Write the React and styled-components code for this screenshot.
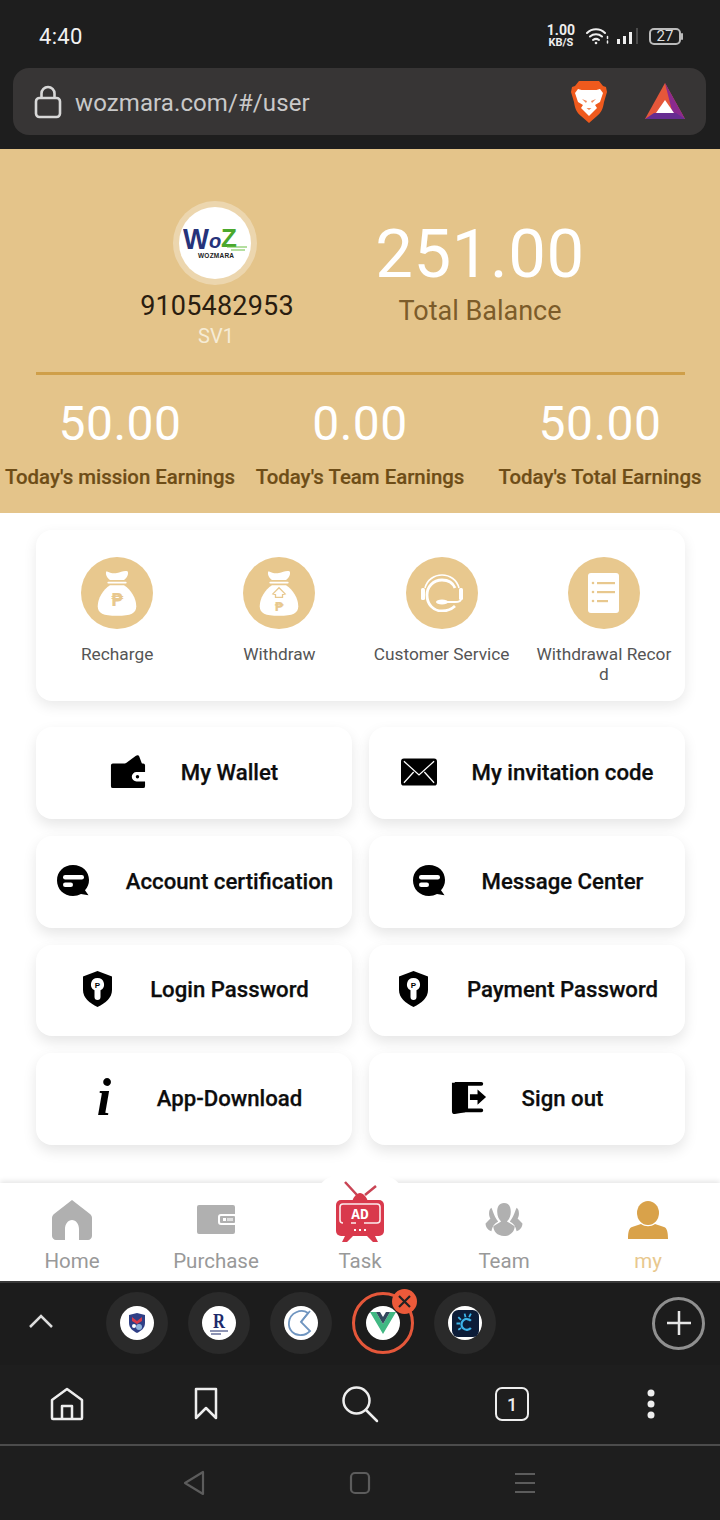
import React from "react";
import styled, { createGlobalStyle } from "styled-components";

const Global = createGlobalStyle`
  html, body { margin: 0; padding: 0; background: #1f1f1f; }
  * { box-sizing: border-box; }
  body { font-family: Roboto, "Liberation Sans", sans-serif; }
`;

const Page = styled.div`
  width: 720px; height: 1520px; display: flex; flex-direction: column;
  background: #1e1e1e; overflow: hidden;
`;
const StatusBar = styled.div`
  height: 68px; flex: none; display: flex; align-items: center; justify-content: space-between;
  padding: 4px 39px 0 39px; color: #f2f2f2;
`;
const Clock = styled.div`font-size: 22px; letter-spacing: .3px;`;
const StatusIcons = styled.div`display: flex; align-items: center; gap: 7px;`;
const Speed = styled.div`
  display: flex; flex-direction: column; align-items: center; font-weight: 700; color: #eee;
  margin-right: 4px;
  b { font-size: 14px; line-height: 13px; font-weight: 700; }
  span { font-size: 11px; line-height: 11px; }
`;
const Battery = styled.div`
  width: 32px; height: 17px; border: 2px solid #bbb; border-radius: 5px; font-size: 15px; line-height: 13px;
  text-align: center; color: #ddd; margin-left: 2px; position: relative;
  &::after { content: ""; position: absolute; right: -4px; top: 3px; width: 2px; height: 7px; background: #bbb; border-radius: 1px; }
`;
const UrlWrap = styled.div`height: 81px; flex: none; padding: 0 14px 14px 13px;`;
const UrlBar = styled.div`
  height: 67px; background: #373535; border-radius: 16px; display: flex; align-items: center;
  padding: 0 21px 0 21px; color: #c9c9c9; font-size: 24px;
`;
const UrlText = styled.div`margin-left: 13px; flex: 1; letter-spacing: .1px; padding-top: 3px;`;
const UrlLogos = styled.div`display: flex; align-items: center; gap: 37px;`;

const Hero = styled.section`height: 364px; flex: none; background: #e4c48a; padding-top: 52px;`;
const HeroTop = styled.div`display: flex; padding-left: 137px; gap: 33px; height: 147px;`;
const Profile = styled.div`width: 160px; display: flex; flex-direction: column; align-items: center;`;
const Avatar = styled.div`
  width: 84px; height: 84px; border-radius: 50%; background: #ecd6ae; display: flex; align-items: center;
  justify-content: center; margin-left: -5px;
  > div { width: 72px; height: 72px; border-radius: 50%; background: #fff; display: flex; align-items: center; justify-content: center; }
`;
const Phone = styled.div`font-size: 27px; line-height: 32px; color: #2a1d10; margin-top: 5px; letter-spacing: .2px; white-space: nowrap;`;
const Level = styled.div`font-size: 20px; line-height: 24px; color: #f6ecd6; margin-top: 2px; margin-left: -2px;`;
const Balance = styled.div`width: 300px; padding-top: 15px; text-align: center;`;
const BalanceValue = styled.div`font-size: 67px; line-height: 76px; color: #fff; letter-spacing: .6px;`;
const BalanceLabel = styled.div`font-size: 27px; line-height: 34px; color: #7c5c2a; margin-top: 2px;`;
const HeroRule = styled.div`height: 3px; background: #cf9f49; margin: 24px 35px 0 36px;`;
const Stats = styled.div`display: grid; grid-template-columns: repeat(3, 240px); margin-top: 19px;`;
const Stat = styled.div`text-align: center; white-space: nowrap;`;
const StatValue = styled.div`font-size: 48px; line-height: 60px; color: #fff; letter-spacing: .5px;`;
const StatLabel = styled.div`font-size: 20.4px; line-height: 28px; font-weight: 500; color: #6e4d17; margin-top: 9px; -webkit-text-stroke: .2px #6e4d17;`;

const Content = styled.main`height: 670px; flex: none; background: #fff; padding: 17px 35px 0 36px;`;
const QuickCard = styled.div`
  height: 171px; border-radius: 16px; background: #fff; box-shadow: 0 5px 14px rgba(0,0,0,.09);
  display: grid; grid-template-columns: repeat(4, 1fr); padding-top: 27px;
`;
const Quick = styled.div`display: flex; flex-direction: column; align-items: center; padding: 0 12px;`;
const QuickCircle = styled.div`
  width: 72px; height: 72px; border-radius: 50%; background: #e8c88e; display: flex; align-items: center; justify-content: center; flex: none;
`;
const QuickLabel = styled.div`
  font-size: 17.3px; line-height: 20px; color: #555; text-align: center; margin-top: 15px; word-break: break-all; width: 138px;
`;
const ActionGrid = styled.div`display: grid; grid-template-columns: 316px 316px; column-gap: 17px; row-gap: 17px; margin-top: 26px;`;
const ActionCard = styled.div`
  height: 91.75px; border-radius: 16px; background: #fff; box-shadow: 0 6px 14px rgba(0,0,0,.1);
  display: flex; align-items: center; justify-content: center; gap: 35px; padding-bottom: 2px;
`;
const ActionIcon = styled.div`width: 36px; display: flex; justify-content: center; flex: none;`;
const ActionLabel = styled.div`font-size: 22.2px; font-weight: 500; color: #0d0d0d; white-space: nowrap; -webkit-text-stroke: .25px #0d0d0d;`;

const TabBar = styled.nav`
  height: 98px; flex: none; background: #fff; display: grid; grid-template-columns: repeat(5, 144px);
  position: relative; box-shadow: 0 -2px 5px rgba(0,0,0,.1);
  &::before { content: ""; position: absolute; left: 318px; top: -12px; width: 84px; height: 40px; border-radius: 50% 50% 0 0; background: #fff; }
`;
const TabItem = styled.div`
  position: relative; display: flex; flex-direction: column; align-items: center;
  height: 98px; padding-bottom: 8px;
`;
const TabIconBox = styled.div`
  display: flex; justify-content: center; flex: none;
  align-items: ${p => (p.$raised ? "flex-start" : "center")};
  height: ${p => (p.$raised ? 69 : 66)}px;
  margin-top: ${p => (p.$raised ? -3 : 0)}px;
  padding-top: ${p => (p.$raised ? 0 : 7)}px;
`;
const TabLabel = styled.div`font-size: 20.5px; line-height: 24px; color: ${p => (p.$active ? "#e8c88e" : "#999")};`;

const BrowserTabs = styled.div`
  height: 84px; flex: none; background: #1c1c1c; border-top: 2px solid #3a3a3a; display: flex; align-items: center;
  padding: 0 15px 2px 29px;
`;
const Chevron = styled.div`width: 24px; display: flex; margin-right: 53px; margin-top: -4px;`;
const Chips = styled.div`display: flex; gap: 20px;`;
const Chip = styled.div`
  width: 62px; height: 62px; border-radius: 50%; background: ${p => (p.$active ? "transparent" : "#2a2a2a")};
  border: ${p => (p.$active ? "3px solid #e5573a" : "none")};
  display: flex; align-items: center; justify-content: center; position: relative;
`;
const Favicon = styled.div`
  width: 34px; height: 34px; border-radius: 50%; background: #fff; display: flex; align-items: center; justify-content: center;
`;
const CloseBadge = styled.div`
  position: absolute; right: -6px; top: -6px; width: 25px; height: 25px; border-radius: 50%; background: #ec5a3a;
  display: flex; align-items: center; justify-content: center;
`;
const AddButton = styled.div`
  margin-left: auto; width: 53px; height: 53px; border-radius: 50%; border: 3px solid #8f8f8f; display: flex; align-items: center; justify-content: center;
`;
const Toolbar = styled.div`
  height: 79px; flex: none; display: grid; grid-template-columns: 134px 144px 164px 140px 138px; align-items: center; background: #1e1e1e;
  justify-items: center; padding-bottom: 1px;
`;
const TabCount = styled.div`
  width: 34px; height: 34px; border: 2.5px solid #eee; border-radius: 7px; display: flex; align-items: center; justify-content: center;
  color: #eee; font-size: 18px; font-weight: 500;
`;
const Rule = styled.div`height: 2px; flex: none; background: #4c4c4c;`;
const SystemNav = styled.div`flex: 1; display: flex; align-items: center; justify-content: center; gap: 143px; background: #1e1e1e; padding-right: 3px;`;

/* drawings */
const Lock = () => (
  <svg width="28" height="34" viewBox="0 0 28 34" fill="none" stroke="#d8d8d8" strokeWidth="2.6">
    <rect x="2" y="13" width="24" height="19" rx="3.5" /><path d="M7.5 13V8.5a6.5 6.5 0 0 1 13 0V13" />
  </svg>
);
const Wifi = () => (
  <svg width="24" height="18" viewBox="0 0 24 18" fill="none" stroke="#eee" strokeWidth="2" strokeLinecap="round">
    <path d="M1 6c5-5 13-5 18 0M4 9.500c3.500-3 8.500-3 12 0M7 13c2-1.500 4-1.500 6 0" />
    <circle cx="10" cy="16" r="1.300" fill="#eee" stroke="none" />
    <path d="M21.500 9.500v2M21.500 14v2" strokeWidth="1.500" />
  </svg>
);
const Signal = () => (
  <svg width="23" height="18" viewBox="0 0 23 18" fill="#eee">
    <rect x="0" y="12" width="3" height="5" /><rect x="6" y="9" width="3" height="8" /><rect x="12" y="5" width="3" height="12" />
    <rect x="19" y="1" width="2" height="16" fill="#4a4a4a" />
  </svg>
);
const Brave = () => (
  <svg width="38" height="44" viewBox="0 0 38 44">
    <path d="M9 1h20l4 5 3 1 1 5-3 10c-1 7-3 11-7 14l-8 7-8-7c-4-3-6-7-7-14L1 12l1-5 3-1z" fill="#ef5a1d" />
    <path d="M8 9c4 1.500 8 1 11 1s7 .5 11-1l3 4-3 9-5 3 2 3-8 8-8-8 2-3-5-3-3-9z" fill="#fff" />
    <path d="M12 19l5 2-1 2zM26 19l-5 2 1 2zM16.500 28h5l-2.500 2z" fill="#ef8a5d" />
  </svg>
);
const Bat = () => (
  <svg width="40" height="38" viewBox="0 0 40 38">
    <path d="M20 0l20 36H0z" fill="#e5573a" /><path d="M20 0l20 36H29z" fill="#8a2a8f" /><path d="M0 36l9-6h22l9 6z" fill="#662d91" />
    <path d="M20 17l9 13H11z" fill="#fff" />
  </svg>
);
const WozLogo = () => (
  <svg width="64" height="42" viewBox="0 0 64 42">
    <text x="0" y="27" fontFamily="Liberation Sans" fontWeight="700" fontSize="30" fill="#26337a" textLength="26" lengthAdjust="spacingAndGlyphs">W</text>
    <text x="26" y="26" fontFamily="Liberation Sans" fontWeight="700" fontStyle="italic" fontSize="20" fill="#26337a">o</text>
    <text x="38" y="25" fontFamily="Liberation Sans" fontWeight="700" fontSize="26" fill="#4aa82e">Z</text>
    <path d="M44 25h20M48 28h14" stroke="#6bbf45" strokeWidth="1.200" />
    <text x="15" y="36" fontFamily="Liberation Sans" fontWeight="700" fontSize="6.500" fill="#222" textLength="36">WOZMARA</text>
  </svg>
);
const Bag = ({ up }) => (
  <svg width="42" height="50" viewBox="0 0 48 56">
    <path d="M12 3c4 2 8 3 12 2s8-3 12-2c2 3-1 8-4 10H16c-3-2-6-7-4-10z" fill="#fff" />
    <rect x="13" y="15" width="22" height="2" rx="1" fill="#fff" />
    <path d="M16 19h16c8 5 14 15 14 24 0 8-6 11-22 11S2 51 2 43c0-9 6-19 14-24z" fill="#fff" />
    {up && <path d="M24 22l7 7-3 1v3h-8v-3l-3-1z" fill="none" stroke="#e8c88e" strokeWidth="1.500" />}
    <text x="24" y={up ? 49 : 43} textAnchor="middle" fontFamily="DejaVu Sans" fontWeight="700" fontSize={up ? 15 : 20} fill="#e8c88e">₱</text>
  </svg>
);
const Headset = () => (
  <svg width="42" height="38" viewBox="0 0 42 38" fill="none" stroke="#fff" strokeWidth="1.600">
    <path d="M4 14C6 6 13 1 21 1s15 5 17 13" />
    <path d="M34 32c-3 3-8 5-13 5-9 0-15-7-15-16 0-8 6-15 15-15 6 0 11 3 13 8" strokeWidth="2.800" />
    <rect x="0" y="14" width="4" height="12" rx="1.500" fill="#fff" stroke="none" /><rect x="38" y="14" width="4" height="12" rx="1.500" fill="#fff" stroke="none" />
    <ellipse cx="21" cy="28" rx="6" ry="2.500" fill="#fff" stroke="none" /><path d="M25 28h9c3 0 6-1 6-3" strokeWidth="1.800" />
  </svg>
);
const Doc = () => (
  <svg width="31" height="40" viewBox="0 0 31 40">
    <rect x="0" y="0" width="31" height="40" rx="3" fill="#fff" />
    {[10, 19, 28].map((y, i) => (
      <g key={y} fill="#e8c88e"><circle cx="5" cy={y} r="1.300" /><rect x="9" y={y - 1} width={i === 2 ? 11 : 18} height="2.200" /></g>
    ))}
  </svg>
);
const WalletIcon = () => (
  <svg width="38" height="36" viewBox="0 0 38 36">
    <path d="M15 10L27 1c2-1 3-1 4 1l3 8z" fill="#000" />
    <path d="M3 9h32a2 2 0 0 1 2 2v7H28a5 5 0 0 0 0 10h9v5a2 2 0 0 1-2 2H3a2 2 0 0 1-2-2V11a2 2 0 0 1 2-2z" fill="#000" />
    <circle cx="29" cy="23" r="1.800" fill="#000" />
  </svg>
);
const MailIcon = () => (
  <svg width="37" height="28" viewBox="0 0 37 28">
    <rect width="37" height="28" rx="3" fill="#000" />
    <path d="M3 3l15.500 14L34 3M3 25l10-11M34 25L24 14" stroke="#fff" strokeWidth="1.300" fill="none" />
  </svg>
);
const ChatIcon = () => (
  <svg width="34" height="32" viewBox="0 0 34 32">
    <path d="M17 0c9.400 0 16 6.500 16 15 0 4-1.400 7.500-4 10.200l3.500 5L25 29c-2.400 1.300-5 2-8 2C7.600 31 1 24 1 15.500 1 6.500 7.600 0 17 0z" fill="#000" />
    <rect x="7" y="10" width="21" height="4.500" rx="2.200" fill="#fff" /><rect x="7" y="17.500" width="10" height="4.500" rx="2.200" fill="#fff" />
  </svg>
);
const ShieldIcon = () => (
  <svg width="31" height="36" viewBox="0 0 31 36">
    <path d="M15.500 0L30 5.500V19c0 8-6.500 13-14.500 17C7.500 32 1 27 1 19V5.500z" fill="#000" />
    <path d="M15.500 7a6.500 6.500 0 0 1 3 12.300V26a2.500 2.500 0 0 1-6 0v-6.700A6.500 6.500 0 0 1 15.500 7z" fill="#fff" />
    <text x="15.500" y="16.500" textAnchor="middle" fontFamily="Liberation Sans" fontWeight="700" fontSize="8" fill="#000">P</text>
  </svg>
);
const InfoIcon = () => (
  <svg width="24" height="64" viewBox="0 0 24 64">
    <text x="12" y="49" textAnchor="middle" fontFamily="Liberation Serif" fontWeight="700" fontStyle="italic" fontSize="52" fill="#000">i</text>
  </svg>
);
const SignOutIcon = () => (
  <svg width="38" height="36" viewBox="0 0 38 36">
    <path d="M1 2h14v31L4 35c-2 0-3-1-3-3z" fill="#000" /><path d="M4 1h28a2 2 0 0 1 0 4H4zM4 29h28a2 2 0 0 1 0 4H4z" fill="#000" />
    <path d="M20 14h8V9l9 8-9 8v-5h-8z" fill="#000" /><rect x="13" y="4" width="5" height="26" fill="#000" />
  </svg>
);
const HomeTab = () => (
  <svg width="40" height="40" viewBox="0 0 40 40">
    <path d="M20 0l18 14c1 1 2 2 2 4v18c0 2-2 4-4 4h-9V29c0-5-3-9-7-9s-7 4-7 9v11H4c-2 0-4-2-4-4V18c0-2 1-3 2-4z" fill="#b0b0b0" />
  </svg>
);
const WalletTab = () => (
  <svg width="38" height="29" viewBox="0 0 38 29">
    <path d="M2 0h34a2 2 0 0 1 2 2v7H24a3 3 0 0 0-3 3v5a3 3 0 0 0 3 3h14v7a2 2 0 0 1-2 2H2a2 2 0 0 1-2-2V2a2 2 0 0 1 2-2z" fill="#b0b0b0" />
    <rect x="23" y="11" width="15" height="7" rx="1" fill="#b0b0b0" /><rect x="26" y="13" width="3" height="3" fill="#fff" /><rect x="30" y="13" width="6" height="3" fill="#e0e0e0" />
  </svg>
);
const TvTab = () => (
  <svg width="50" height="62" viewBox="0 0 50 62">
    <path d="M10 2l12 13M41 6L30 15" stroke="#c94454" strokeWidth="2.500" fill="none" />
    <path d="M17 22c1-5 5-9 8-9s7 4 8 9z" fill="#d63a4a" />
    <rect x="1" y="20" width="48" height="36" rx="5" fill="#d9394c" />
    <path d="M10 56l-3 6h5l6-6zM40 56l3 6h-5l-6-6z" fill="#d9394c" />
    <path d="M8 43c-2 0-3-1-3-3V27c0-2 1-3 3-3h34c2 0 3 1 3 3v13c0 2-1 3-3 3H29M21 43h-5" stroke="#fff" strokeWidth="1.600" fill="none" opacity=".9" />
    <text x="25" y="39" textAnchor="middle" fontFamily="Liberation Mono" fontWeight="700" fontSize="14.500" fill="#fff">AD</text>
    <path d="M19 49h2v2h-2zM24 49h2v2h-2zM29 49h2v2h-2z" fill="#fff" />
  </svg>
);
const TeamTab = () => (
  <svg width="40" height="33" viewBox="0 0 40 34" fill="#b0b0b0">
    <path d="M7 5c-3 2-3 8-1 11l-5 5c0 4 3 7 6 8 1-5 3-8 7-10-4-4-5-10-7-14zM33 5c3 2 3 8 1 11l5 5c0 4-3 7-6 8-1-5-3-8-7-10 4-4 5-10 7-14z" />
    <path d="M20 0c5 0 7 4 7 9 0 5-2 8-4 10l8 5c0 5-4 10-11 10S9 29 9 24l8-5c-2-2-4-5-4-10 0-5 2-9 7-9z" />
  </svg>
);
const UserTab = () => (
  <svg width="40" height="38" viewBox="0 0 40 38" fill="#d9a24a">
    <ellipse cx="20" cy="12" rx="11" ry="12" /><path d="M13 23c4 3 10 3 14 0l9 3c3 1 4 5 4 12H0c0-7 1-11 4-12z" />
  </svg>
);
const ChevronUp = () => (
  <svg width="24" height="14" viewBox="0 0 24 14" fill="none" stroke="#ddd" strokeWidth="2.500"><path d="M1 13L12 2l11 11" /></svg>
);
const ShieldFav = () => (
  <svg width="18" height="20" viewBox="0 0 18 20">
    <path d="M1 2l8-2 8 2v8c0 5-4 8-8 10-4-2-8-5-8-10z" fill="#2f3f86" /><path d="M4 4l5 4 5-4v4l-5 3-5-3z" fill="#d73a4a" /><circle cx="11" cy="14" r="3" fill="#8fb3dc" /><circle cx="6" cy="13" r="2" fill="#fff" />
  </svg>
);
const RFav = () => (
  <svg width="24" height="28" viewBox="0 0 24 28">
    <text x="12" y="19" textAnchor="middle" fontFamily="Liberation Serif" fontWeight="700" fontSize="21" fill="#1d2a6b" textLength="12" lengthAdjust="spacingAndGlyphs">R</text>
    <path d="M3 22h18M4 25h10" stroke="#1d2a6b" strokeWidth="1.200" />
  </svg>
);
const ClockFav = () => (
  <svg width="30" height="30" viewBox="0 0 30 30" fill="none" stroke="#6f95c0" strokeWidth="1.800">
    <path d="M22 5C15 0 4 5 3 14c-1 8 5 14 13 13 3 0 6-2 8-4L15 14z" /><path d="M15 14L24 3" />
  </svg>
);
const VueFav = () => (
  <svg width="26" height="24" viewBox="0 0 26 24">
    <path d="M0 1h6l7 12L20 1h6L13 23z" fill="#41b883" /><path d="M6 1h4l3 5 3-5h4l-7 12z" fill="#34495e" />
  </svg>
);
const BurstFav = () => (
  <svg width="27" height="27" viewBox="0 0 30 30">
    <rect width="30" height="30" rx="7" fill="#0c1c38" />
    <path d="M21 12a6 6 0 1 0 0 8" stroke="#3cb4ea" strokeWidth="2.500" fill="none" />
    <path d="M14 4l1 4M21 4l-2 4M7 8l3 3M5 15h4M7 22l3-2" stroke="#3cb4ea" strokeWidth="2" />
  </svg>
);
const OutlineHome = () => (
  <svg width="34" height="34" viewBox="0 0 34 34" fill="none" stroke="#eee" strokeWidth="2.500" strokeLinejoin="round">
    <path d="M2 13L17 2l15 11v18a1 1 0 0 1-1 1H3a1 1 0 0 1-1-1z" /><path d="M12 32V19h10v13" />
  </svg>
);
const Bookmark = () => (
  <svg width="24" height="34" viewBox="0 0 24 34" fill="none" stroke="#eee" strokeWidth="2.500" strokeLinejoin="round"><path d="M2 2h20v29l-10-10-10 10z" /></svg>
);
const Search = () => (
  <svg width="38" height="38" viewBox="0 0 38 38" fill="none" stroke="#eee" strokeWidth="2.500" strokeLinecap="round">
    <circle cx="15.500" cy="15.500" r="13" /><path d="M25 25l11 11" />
  </svg>
);
const Dots = () => (
  <svg width="10" height="30" viewBox="0 0 10 30" fill="#eee"><circle cx="5" cy="4" r="3.500" /><circle cx="5" cy="15" r="3.500" /><circle cx="5" cy="26" r="3.500" /></svg>
);
const NavBack = () => (
  <svg width="24" height="26" viewBox="0 0 24 26" fill="none" stroke="#5c5c5c" strokeWidth="2.200" strokeLinejoin="round"><path d="M21 2v22L3 13z" /></svg>
);
const NavHome = () => (
  <svg width="22" height="24" viewBox="0 0 22 24" fill="none" stroke="#5c5c5c" strokeWidth="2.200"><rect x="2" y="2" width="18" height="20" rx="4" /></svg>
);
const NavMenu = () => (
  <svg width="22" height="22" viewBox="0 0 22 22" fill="none" stroke="#5c5c5c" strokeWidth="2.200"><path d="M1 2h20M1 11h20M1 20h20" /></svg>
);

const quick = [
  { label: "Recharge", icon: <Bag /> },
  { label: "Withdraw", icon: <Bag up /> },
  { label: "Customer Service", icon: <Headset /> },
  { label: "Withdrawal Record", icon: <Doc /> },
];
const actions = [
  { label: "My Wallet", icon: <WalletIcon /> },
  { label: "My invitation code", icon: <MailIcon /> },
  { label: "Account certification", icon: <ChatIcon /> },
  { label: "Message Center", icon: <ChatIcon /> },
  { label: "Login Password", icon: <ShieldIcon /> },
  { label: "Payment Password", icon: <ShieldIcon /> },
  { label: "App-Download", icon: <InfoIcon /> },
  { label: "Sign out", icon: <SignOutIcon /> },
];
const tabs = [
  { label: "Home", icon: <HomeTab /> },
  { label: "Purchase", icon: <WalletTab /> },
  { label: "Task", icon: <TvTab />, raised: true },
  { label: "Team", icon: <TeamTab /> },
  { label: "my", icon: <UserTab />, active: true },
];
const stats = [
  ["50.00", "Today's mission Earnings"],
  ["0.00", "Today's Team Earnings"],
  ["50.00", "Today's Total Earnings"],
];
const favs = [<ShieldFav />, <RFav />, <ClockFav />, <VueFav />, <BurstFav />];

export default function App() {
  return (
    <Page>
      <Global />
      <StatusBar>
        <Clock>4:40</Clock>
        <StatusIcons>
          <Speed><b>1.00</b><span>KB/S</span></Speed>
          <Wifi />
          <Signal />
          <Battery>27</Battery>
        </StatusIcons>
      </StatusBar>
      <UrlWrap>
        <UrlBar>
          <Lock />
          <UrlText>wozmara.com/#/user</UrlText>
          <UrlLogos><Brave /><Bat /></UrlLogos>
        </UrlBar>
      </UrlWrap>
      <Hero>
        <HeroTop>
          <Profile>
            <Avatar><div><WozLogo /></div></Avatar>
            <Phone>9105482953</Phone>
            <Level>SV1</Level>
          </Profile>
          <Balance>
            <BalanceValue>251.00</BalanceValue>
            <BalanceLabel>Total Balance</BalanceLabel>
          </Balance>
        </HeroTop>
        <HeroRule />
        <Stats>
          {stats.map(([v, l]) => (
            <Stat key={l}><StatValue>{v}</StatValue><StatLabel>{l}</StatLabel></Stat>
          ))}
        </Stats>
      </Hero>
      <Content>
        <QuickCard>
          {quick.map(q => (
            <Quick key={q.label}><QuickCircle>{q.icon}</QuickCircle><QuickLabel>{q.label}</QuickLabel></Quick>
          ))}
        </QuickCard>
        <ActionGrid>
          {actions.map(a => (
            <ActionCard key={a.label}><ActionIcon>{a.icon}</ActionIcon><ActionLabel>{a.label}</ActionLabel></ActionCard>
          ))}
        </ActionGrid>
      </Content>
      <TabBar>
        {tabs.map(t => (
          <TabItem key={t.label}>
            <TabIconBox $raised={t.raised}>{t.icon}</TabIconBox>
            <TabLabel $active={t.active}>{t.label}</TabLabel>
          </TabItem>
        ))}
      </TabBar>
      <BrowserTabs>
        <Chevron><ChevronUp /></Chevron>
        <Chips>
          {favs.map((f, i) => (
            <Chip key={i} $active={i === 3}>
              <Favicon>{f}</Favicon>
              {i === 3 && (
                <CloseBadge>
                  <svg width="13" height="13" viewBox="0 0 13 13" stroke="#222" strokeWidth="2.200"><path d="M1 1l11 11M12 1L1 12" /></svg>
                </CloseBadge>
              )}
            </Chip>
          ))}
        </Chips>
        <AddButton>
          <svg width="26" height="26" viewBox="0 0 26 26" stroke="#e6e6e6" strokeWidth="2.500"><path d="M13 1v24M1 13h24" /></svg>
        </AddButton>
      </BrowserTabs>
      <Toolbar>
        <OutlineHome />
        <Bookmark />
        <Search />
        <TabCount>1</TabCount>
        <Dots />
      </Toolbar>
      <Rule />
      <SystemNav>
        <NavBack />
        <NavHome />
        <NavMenu />
      </SystemNav>
    </Page>
  );
}
